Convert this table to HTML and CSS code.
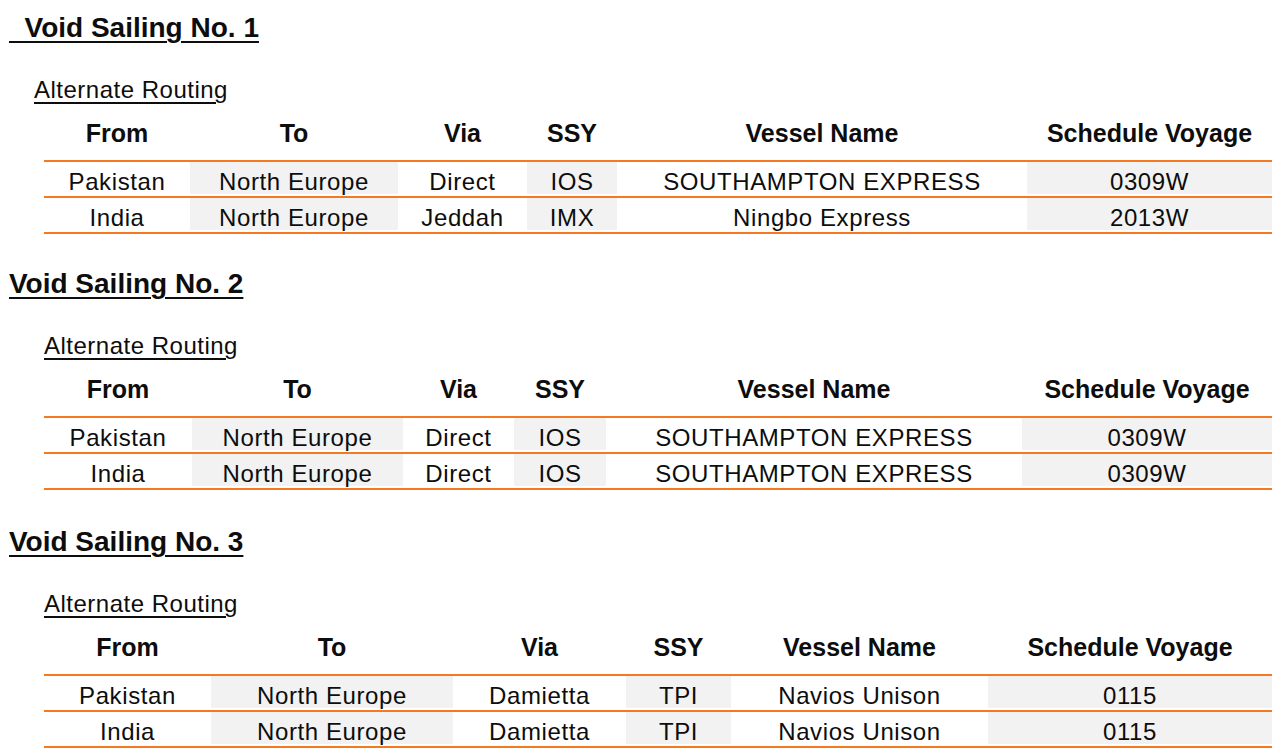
FILE: index.html
```html
<!DOCTYPE html>
<html lang="en">
<head>
<meta charset="utf-8">
<title>Void Sailings</title>
<link rel="stylesheet" href="styles.css">
</head>
<body>
<section class="sailing first">
  <h2 class="title">&nbsp;&nbsp;Void Sailing No. 1</h2>
  <p class="sub sub-first">Alternate Routing</p>
  <table class="routes t1">
    <colgroup><col class="c1"><col class="c2"><col class="c3"><col class="c4"><col class="c5"><col class="c6"></colgroup>
    <thead><tr><th>From</th><th>To</th><th>Via</th><th>SSY</th><th>Vessel Name</th><th>Schedule Voyage</th></tr></thead>
    <tbody>
      <tr><td>Pakistan</td><td>North Europe</td><td>Direct</td><td>IOS</td><td>SOUTHAMPTON EXPRESS</td><td>0309W</td></tr>
      <tr><td>India</td><td>North Europe</td><td>Jeddah</td><td>IMX</td><td>Ningbo Express</td><td>2013W</td></tr>
    </tbody>
  </table>
</section>
<section class="sailing second">
  <h2 class="title">Void Sailing No. 2</h2>
  <p class="sub">Alternate Routing</p>
  <table class="routes t2">
    <colgroup><col class="c1"><col class="c2"><col class="c3"><col class="c4"><col class="c5"><col class="c6"></colgroup>
    <thead><tr><th>From</th><th>To</th><th>Via</th><th>SSY</th><th>Vessel Name</th><th>Schedule Voyage</th></tr></thead>
    <tbody>
      <tr><td>Pakistan</td><td>North Europe</td><td>Direct</td><td>IOS</td><td>SOUTHAMPTON EXPRESS</td><td>0309W</td></tr>
      <tr><td>India</td><td>North Europe</td><td>Direct</td><td>IOS</td><td>SOUTHAMPTON EXPRESS</td><td>0309W</td></tr>
    </tbody>
  </table>
</section>
<section class="sailing third">
  <h2 class="title">Void Sailing No. 3</h2>
  <p class="sub">Alternate Routing</p>
  <table class="routes t3">
    <colgroup><col class="c1"><col class="c2"><col class="c3"><col class="c4"><col class="c5"><col class="c6"></colgroup>
    <thead><tr><th>From</th><th>To</th><th>Via</th><th>SSY</th><th>Vessel Name</th><th>Schedule Voyage</th></tr></thead>
    <tbody>
      <tr><td>Pakistan</td><td>North Europe</td><td>Damietta</td><td>TPI</td><td>Navios Unison</td><td>0115</td></tr>
      <tr><td>India</td><td>North Europe</td><td>Damietta</td><td>TPI</td><td>Navios Unison</td><td>0115</td></tr>
    </tbody>
  </table>
</section>
</body>
</html>
```
FILE: styles.css
```css
html, body {
  background: #ffffff;
}
body {
  margin: 0;
  padding: 12px 0 0 0;
  font-family: "Liberation Sans", Arial, sans-serif;
  color: #0d0d0d;
}
.sailing.second { margin-top: 34px; }
.sailing.third { margin-top: 36px; }

.title {
  margin: 0 0 0 9px;
  font-size: 28px;
  font-weight: bold;
  line-height: 32px;
  text-decoration: underline;
  text-decoration-thickness: 2px;
  text-underline-offset: 4px;
  white-space: pre;
}
.sub {
  margin: 31px 0 0 44px;
  font-size: 24px;
  letter-spacing: 0.5px;
  line-height: 30px;
  text-decoration: underline;
  text-decoration-thickness: 2px;
  text-underline-offset: 4px;
}
.sub.sub-first { margin-left: 34px; }

.routes {
  margin: 13px 0 0 44px;
  width: 1228px;
  table-layout: fixed;
  border-collapse: separate;
  border-spacing: 0;
}
.routes th {
  font-size: 25px;
  font-weight: bold;
  line-height: 30px;
  height: 42px;
  padding: 0 0 12px 0;
  box-sizing: border-box;
  text-align: center;
  vertical-align: top;
  white-space: nowrap;
}
.routes td {
  font-size: 24px;
  letter-spacing: 0.6px;
  line-height: 29px;
  padding: 5px 0 0 0;
  height: 36px;
  box-sizing: border-box;
  text-align: center;
  vertical-align: top;
  white-space: nowrap;
  border-top: 2px solid #f47920;
}
.routes tbody tr:last-child td {
  border-bottom: 2px solid #f47920;
  height: 38px;
}
.routes td:nth-child(even) {
  background: #f2f2f2;
  box-shadow: inset 0 -2px 0 #ffffff;
}

.t1 .c1 { width: 146px; }
.t1 .c2 { width: 208px; }
.t1 .c3 { width: 129px; }
.t1 .c4 { width: 90px; }
.t1 .c5 { width: 410px; }
.t1 .c6 { width: 245px; }

.t2 .c1 { width: 148px; }
.t2 .c2 { width: 211px; }
.t2 .c3 { width: 111px; }
.t2 .c4 { width: 92px; }
.t2 .c5 { width: 416px; }
.t2 .c6 { width: 250px; }

.t3 .c1 { width: 167px; }
.t3 .c2 { width: 242px; }
.t3 .c3 { width: 173px; }
.t3 .c4 { width: 105px; }
.t3 .c5 { width: 257px; }
.t3 .c6 { width: 284px; }
```
